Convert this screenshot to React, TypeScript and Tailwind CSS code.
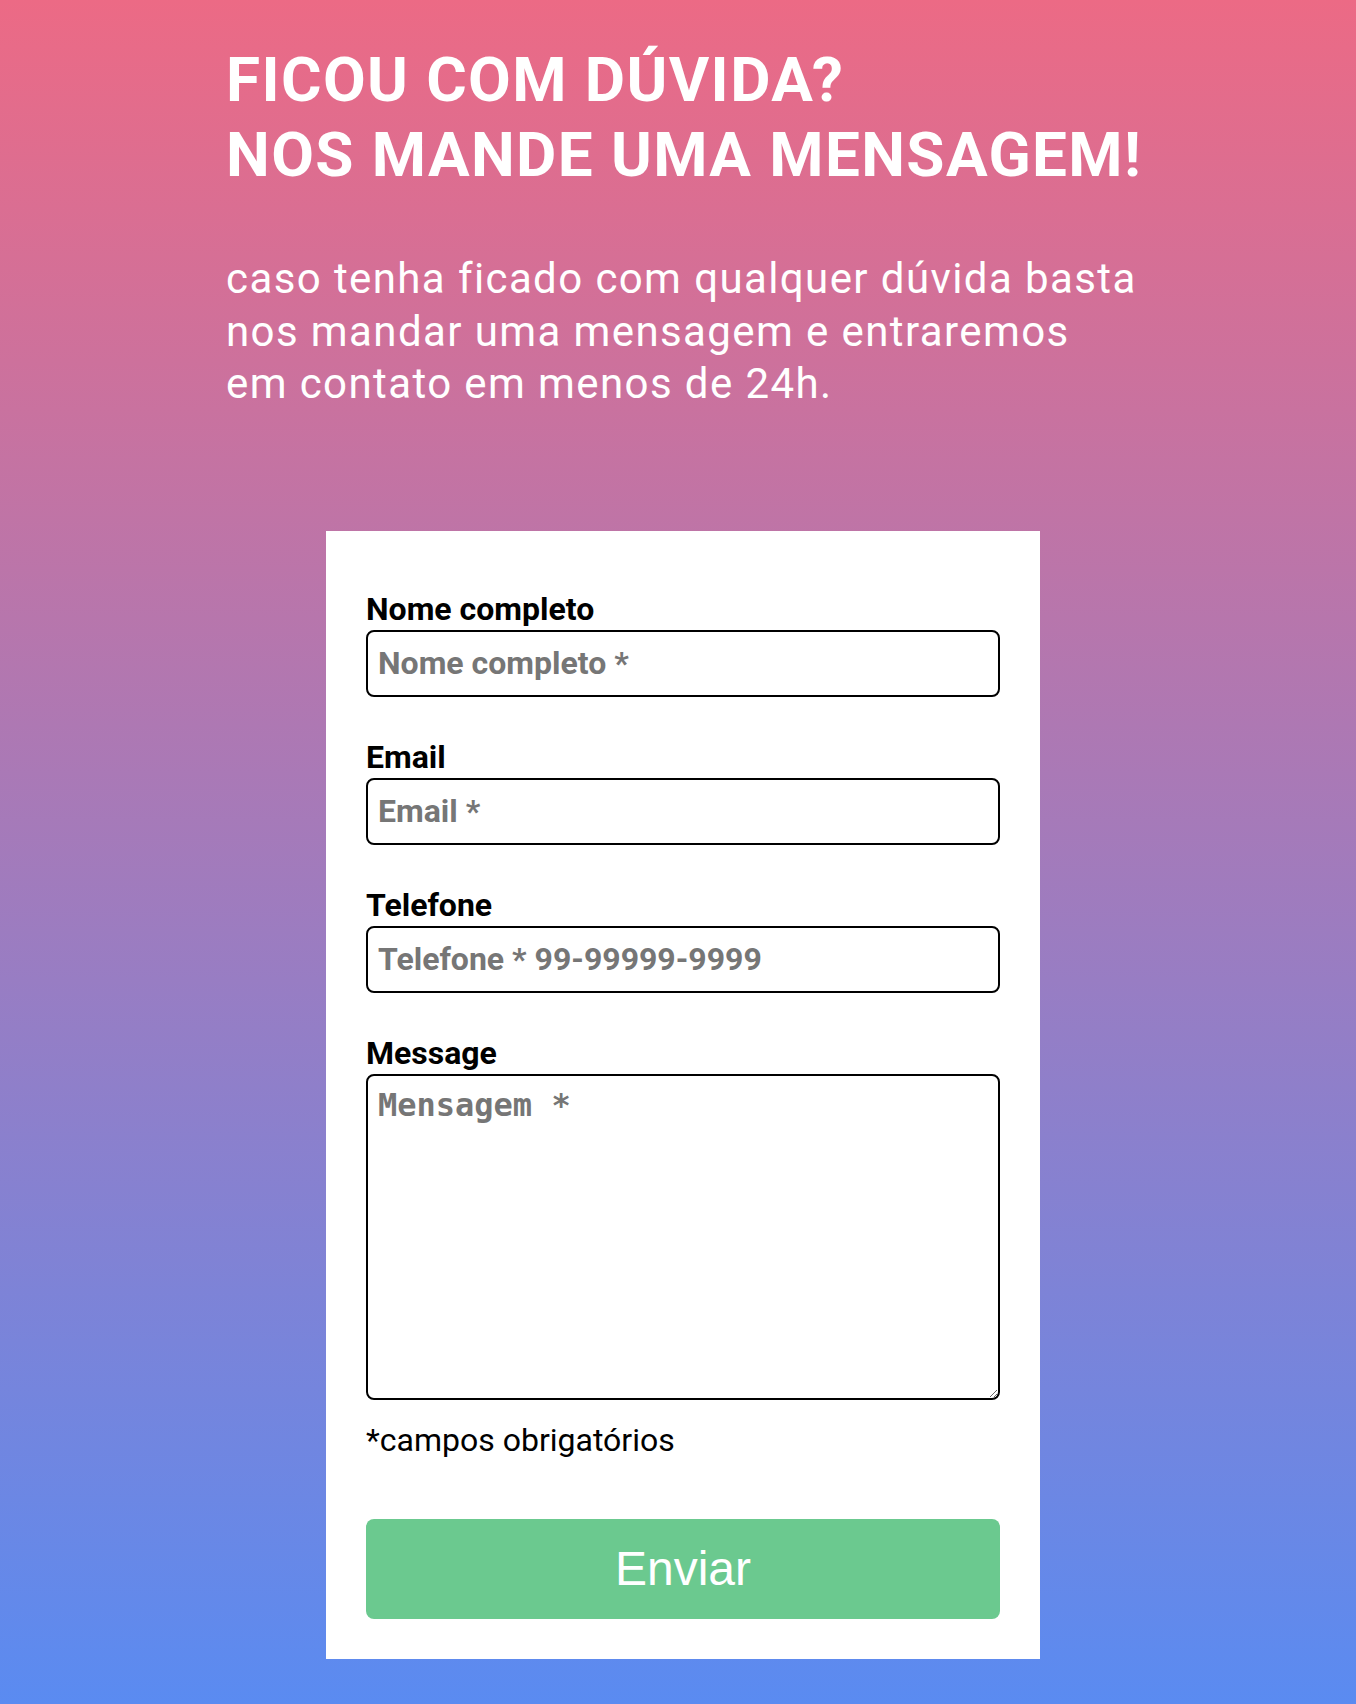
const fields = [
  { label: 'Nome completo', placeholder: 'Nome completo *', type: 'text' },
  { label: 'Email', placeholder: 'Email *', type: 'email' },
  { label: 'Telefone', placeholder: 'Telefone * 99-99999-9999', type: 'tel' },
]

function ContactForm() {
  return (
    <form className="mt-[120px] ml-[100px] w-[714px] bg-white px-10 pt-[61px] pb-10">
      {fields.map((f) => (
        <div key={f.label} className="mb-[43px]">
          <label className="block text-[32px] leading-[35px] font-bold text-black">{f.label}</label>
          <input
            type={f.type}
            placeholder={f.placeholder}
            className="mt-[3px] block h-[67px] w-full rounded-[8px] border-2 border-black px-[10px] text-[32px] font-bold text-black outline-none placeholder:text-[#767676]"
          />
        </div>
      ))}
      <div>
        <label className="block text-[32px] leading-[35px] font-bold text-black">Message</label>
        <textarea
          placeholder="Mensagem *"
          className="mt-[3px] block h-[326px] w-full rounded-[8px] border-2 border-black px-[10px] pt-[5px] pb-[8px] font-['DejaVu_Sans_Mono',monospace] text-[32px] font-bold text-black outline-none placeholder:text-[#767676]"
        />
      </div>
      <p className="mt-[22px] text-[32px] leading-[37.5px] text-black">*campos obrigatórios</p>
      <button
        type="button"
        className="mt-[60px] block h-[100px] w-full rounded-[8px] bg-[#6bc98f] font-['Liberation_Sans',Arial,sans-serif] text-[48px] text-white"
      >
        Enviar
      </button>
    </form>
  )
}

export default function App() {
  return (
    <div className="min-h-[1704px] bg-linear-to-b/srgb from-[#ec6a85] to-[#5a8bf1] pt-[42px] pb-[45px] font-['Roboto',sans-serif]">
      <div className="mx-auto w-[904px]">
        <h1 className="whitespace-nowrap text-[62px] leading-[75px] font-bold tracking-[1.4px] text-white">
          FICOU COM DÚVIDA?
          <br />
          NOS MANDE UMA MENSAGEM!
        </h1>
        <p className="mt-[61px] whitespace-nowrap text-[42px] leading-[52.5px] tracking-[1.4px] text-white">
          caso tenha ficado com qualquer dúvida basta
          <br />
          nos mandar uma mensagem e entraremos
          <br />
          em contato em menos de 24h.
        </p>
        <ContactForm />
      </div>
    </div>
  )
}
